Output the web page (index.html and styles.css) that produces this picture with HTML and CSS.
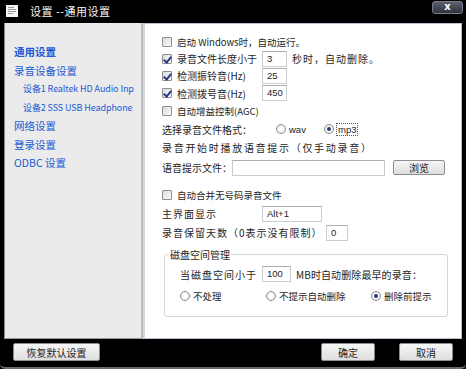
FILE: index.html
```html
<!DOCTYPE html>
<html>
<head>
<meta charset="utf-8">
<link rel="stylesheet" href="styles.css">
</head>
<body>
<div class="window">
  <div class="titlebar">
    <svg class="appicon" width="12" height="12" viewBox="0 0 12 12">
      <rect x="0" y="0" width="12" height="12" fill="#f4f4f4"/>
      <rect x="2" y="2" width="6" height="1" fill="#9a9a9a"/>
      <rect x="2" y="4" width="8" height="1" fill="#9a9a9a"/>
      <rect x="2" y="6" width="8" height="1" fill="#9a9a9a"/>
      <rect x="2" y="8" width="5" height="1" fill="#9a9a9a"/>
    </svg>
    <span class="title">设置 --通用设置</span>
    <div class="close">x</div>
  </div>
  <div class="main">
    <div class="sidebar">
      <div class="nav-item active">通用设置</div>
      <div class="nav-item">录音设备设置</div>
      <div class="nav-item sub">设备1 Realtek HD Audio Inp</div>
      <div class="nav-item sub">设备2 SSS USB Headphone</div>
      <div class="nav-item">网络设置</div>
      <div class="nav-item">登录设置</div>
      <div class="nav-item">ODBC 设置</div>
    </div>
    <div class="content">
      <div class="row r1"><span class="cb"></span><span class="small">启动 Windows时，自动运行。</span></div>
      <div class="row r2"><span class="cb checked"></span><span class="lbl w85">录音文件长度小于</span><span class="input w25">3</span><span class="after">秒时，自动删除。</span></div>
      <div class="row r3"><span class="cb checked"></span><span class="lbl w85">检测振铃音(Hz)</span><span class="input w25">25</span></div>
      <div class="row r4"><span class="cb checked"></span><span class="lbl w85">检测拨号音(Hz)</span><span class="input w25">450</span></div>
      <div class="row r5"><span class="cb"></span><span class="small">自动增益控制(AGC)</span></div>
      <div class="row r6"><span class="txt w114">选择录音文件格式：</span><span class="radio"></span><span class="rlbl w37">wav</span><span class="radio on"></span><span class="rlbl focus">mp3</span></div>
      <div class="row r7"><span class="txt wide">录音开始时播放语音提示（仅手动录音）</span></div>
      <div class="row r8"><span class="txt">语音提示文件：</span><span class="input w152"></span><span class="btn browse">浏览</span></div>
      <div class="row r9"><span class="cb"></span><span class="small">自动合并无号码录音文件</span></div>
      <div class="row r10"><span class="txt w100 spaced">主界面显示</span><span class="input w60 small">Alt+1</span></div>
      <div class="row r11"><span class="txt w164 spaced">录音保留天数（0表示没有限制）</span><span class="input w22">0</span></div>
      <div class="group">
        <span class="legend">磁盘空间管理</span>
        <div class="row g1"><span class="txt w82 spaced">当磁盘空间小于</span><span class="input w29">100</span><span class="after tight">MB时自动删除最早的录音：</span></div>
        <div class="row g2"><span class="radio"></span><span class="rlbl w69">不处理</span><span class="radio"></span><span class="rlbl w93">不提示自动删除</span><span class="radio on"></span><span class="rlbl">删除前提示</span></div>
      </div>
    </div>
  </div>
  <div class="footer">
    <span class="btn reset">恢复默认设置</span>
    <span class="spacer"></span>
    <span class="btn ok">确定</span>
    <span class="btn cancel">取消</span>
  </div>
</div>
</body>
</html>
```
FILE: styles.css
```css
* { box-sizing: border-box; }
html, body { margin: 0; padding: 0; background: #000; }
body {
  width: 466px; height: 369px; overflow: hidden;
  font-family: "Noto Sans CJK SC", "Noto Sans", sans-serif;
  font-size: 10px; color: #1e1e1e;
}
.window {
  width: 466px; height: 369px;
  background: #000;
  border-bottom: 2px solid #6c6c6c;
  border-radius: 0 0 5px 5px;
  display: flex; flex-direction: column;
}
.titlebar {
  height: 23px; display: flex; align-items: center;
  padding-left: 6px; position: relative;
}
.appicon { display: block; margin-top: -2px; }
.title {
  color: #f2f2f2; font-size: 11px; margin-left: 12px; margin-top: -1px;
  letter-spacing: 0.5px;
}
.close {
  position: absolute; right: 3px; top: 1px;
  width: 31px; height: 13px;
  background: linear-gradient(#5a5f6b, #2f333c);
  border: 1px solid #777c88; border-radius: 3px;
  color: #fff; font-family: "DejaVu Sans", sans-serif; font-weight: bold;
  font-size: 10px; line-height: 10px; text-align: center;
}
.main {
  display: flex; height: 316px; margin-left: 4px; width: 458px;
}
.sidebar {
  width: 139px; background: #ebebeb;
  border-left: 1px solid #8a8a8a; border-right: 2px solid #b8bcc2;
  border-bottom: 1px solid #9a9a9a;
  padding: 20px 0 0 9px;
}
.nav-item {
  height: 18.5px; line-height: 18.5px; color: #2259d6;
  font-size: 10.5px; white-space: nowrap;
}
.nav-item.active { font-weight: bold; }
.nav-item.sub { padding-left: 9px; font-size: 9px; letter-spacing: -0.1px; }
.content {
  flex: 1; background: #fff;
  border: 1px solid #b7c1cf; border-left: 2px solid #d4d8de;
  padding: 9px 0 0 17px;
}
.row { display: flex; align-items: center; white-space: nowrap; }
.r1 { height: 17px; }
.r2 { height: 17px; }
.r3 { height: 17px; }
.r4 { height: 18px; }
.r5 { height: 18px; }
.r6 { height: 18px; }
.r7 { height: 18px; }
.r8 { height: 21px; margin-top: 1px; }
.r9 { height: 18px; margin-top: 8px; }
.r10 { height: 19px; }
.r11 { height: 19px; }
.cb {
  width: 10px; height: 10px; border: 1px solid #8e8f8f; border-radius: 1px;
  background: linear-gradient(135deg, #dcdcdc, #fafafa);
  margin-right: 5px; position: relative; flex: none;
}
.cb.checked::after {
  content: ""; position: absolute; left: 2px; top: 0px;
  width: 3px; height: 6px; border: solid #2a3a8a; border-width: 0 2px 2px 0;
  transform: rotate(40deg);
}
.small { font-size: 9.5px; }
.lbl { font-size: 10px; }
.w85 { width: 85px; }
.input {
  height: 16px; border: 1px solid #c9cdd2; border-top-color: #abadb3;
  font-size: 9.5px; line-height: 14px; padding-left: 4px; background: #fff;
  font-family: "Liberation Sans", sans-serif;
}
.w25 { width: 25px; }
.w22 { width: 22px; }
.w29 { width: 29px; }
.w60 { width: 60px; }
.w152 { width: 153px; }
.after { margin-left: 5px; letter-spacing: 1px; }
.after.tight { letter-spacing: 0.1px; }
.txt { font-size: 10px; }
.w114 { width: 114px; }
.w100 { width: 100px; }
.w164 { width: 164px; }
.w82 { width: 82px; }
.spaced { letter-spacing: 1px; }
.wide { letter-spacing: 1.7px; }
.radio {
  width: 10px; height: 10px; border-radius: 50%; border: 1px solid #8f8f8f;
  background: radial-gradient(circle, #fff 30%, #d8d8d8 100%);
  margin-right: 3px; position: relative; flex: none;
}
.radio.on::after {
  content: ""; position: absolute; left: 2px; top: 2px; width: 4px; height: 4px;
  border-radius: 50%; background: #1f3b7a;
}
.rlbl { font-size: 9.5px; font-family: "Liberation Sans", "Noto Sans CJK SC", sans-serif; }
.r6 .rlbl { font-family: "Liberation Sans", sans-serif; }
.w37 { width: 35px; }
.w69 { width: 73px; }
.w93 { width: 92px; }
.focus { outline: 1px dotted #555; padding: 0 1px; line-height: 11px; }
.btn {
  display: flex; align-items: center; justify-content: center;
  height: 16px; font-size: 10px;
  border: 1px solid #8d8d8d; border-radius: 2px;
  background: linear-gradient(#f6f6f6, #dedede);
  color: #1e1e1e;
}
.browse { width: 52px; margin-left: 8px; height: 15px; }
.group {
  position: relative; margin-top: 12px; width: 284px; height: 63px;
  border: 1px solid #d2d5da; border-radius: 3px; margin-left: 2px;
  padding: 10px 0 0 15px;
}
.legend {
  position: absolute; left: 4px; top: -8px; background: #fff;
  padding: 0 1px; font-size: 10px;
}
.g1 { height: 18px; }
.g2 { height: 21px; margin-top: 2px; }
.footer {
  flex: 1; display: flex; align-items: center;
  padding: 0 13px 2px 13px;
}
.spacer { flex: 1; }
.reset { width: 87px; height: 18px; }
.ok { width: 54px; height: 18px; margin-right: 24px; }
.cancel { width: 54px; height: 18px; }
```
